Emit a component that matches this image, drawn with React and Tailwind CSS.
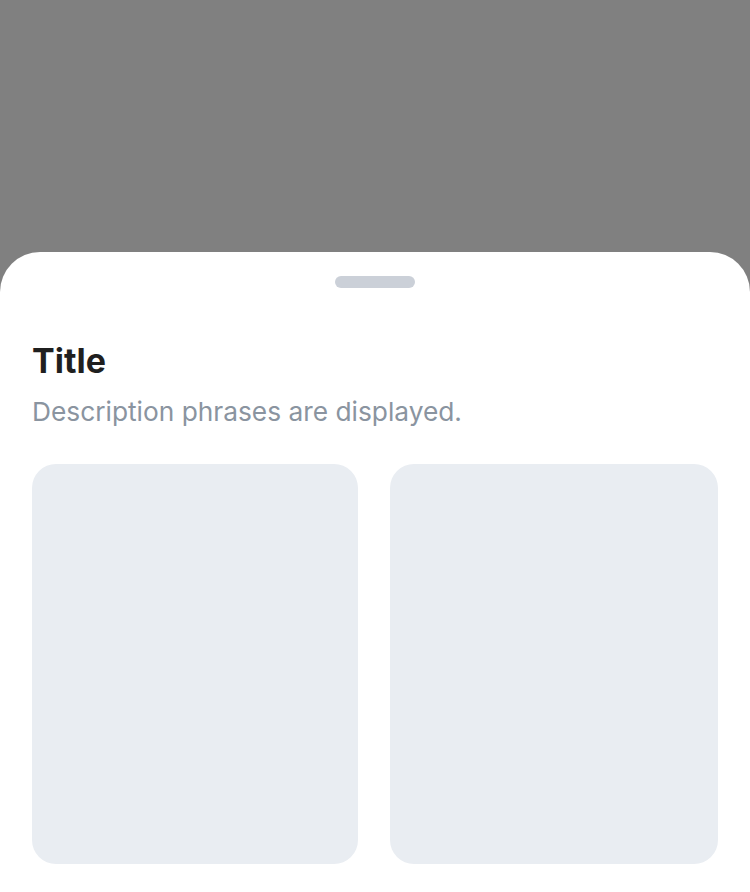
import React from 'react';

export default function App() {
  return (
    <div className="flex min-h-[892px] w-full flex-col bg-[#808080] font-['Inter',sans-serif]">
      <div className="h-[252px] shrink-0" />
      <div className="flex flex-1 flex-col rounded-t-[40px] bg-white px-8">
        <div className="flex justify-center pt-6">
          <div className="h-3 w-20 rounded-full bg-[#cbd0d8]" />
        </div>
        <h1 className="mt-[52px] text-[34px] font-bold leading-[42px] text-[#1f1f1f]">Title</h1>
        <p className="mt-[12px] text-[26.3px] leading-[36px] text-[#8a94a0]">
          Description phrases are displayed.
        </p>
        <div className="mt-[34px] grid grid-cols-[326px_1fr] gap-8">
          <div className="h-[400px] rounded-3xl bg-[#e9edf2]" />
          <div className="h-[400px] rounded-3xl bg-[#e9edf2]" />
        </div>
      </div>
    </div>
  );
}
